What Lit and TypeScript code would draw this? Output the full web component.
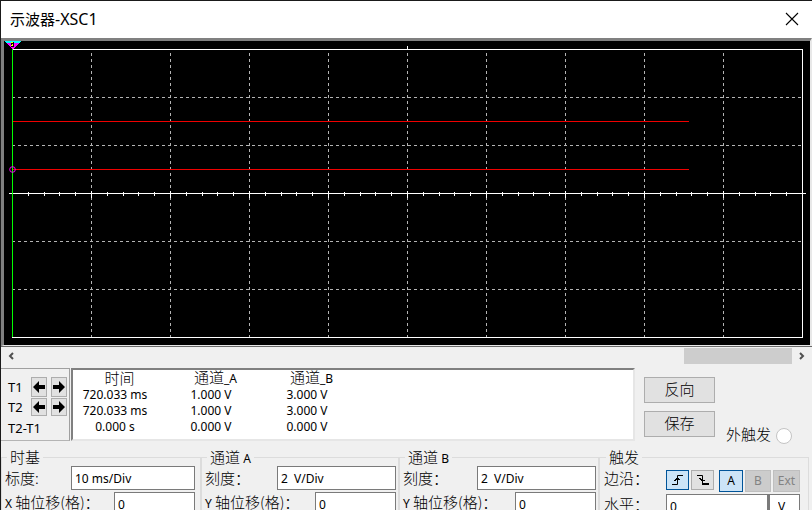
import { LitElement, html, css, svg } from "lit";
import { customElement } from "lit/decorators.js";

const PLOT = { x: 8, y: 8, cols: 10, rows: 6, cw: 79, rh: 48 };

@customElement("scope-screen")
class ScopeScreen extends LitElement {
  static styles = css`
    :host {
      display: block;
      background: #000;
      border-style: solid;
      border-width: 3px 2px 1px 3px;
      border-color: #808080 #e8e8e8 #e8e8e8 #808080;
    }
    svg {
      display: block;
      width: 100%;
      height: auto;
      shape-rendering: crispEdges;
    }
    .frame { fill: none; stroke: #fff; }
    .axis { stroke: #fff; }
    .grid { stroke: #b4b4b4; stroke-dasharray: 3 3; }
    .trace { stroke: #f00000; }
    .cursor { stroke: #00ff00; }
    .ring { fill: none; stroke: #ff00ff; shape-rendering: auto; }
    .top { fill: #00ffff; }
    .tip { fill: #ff00ff; }
    .mark { fill: #ffff00; }
    .ink { fill: #000; }
  `;

  render() {
    const { x, y, cols, rows, cw, rh } = PLOT;
    const w = cols * cw;
    const h = rows * rh;
    const mid = y + h / 2 + 0.5;
    const inner = (n: number) => Array.from({ length: n - 1 }, (_, i) => i + 1);
    return html`
      <svg viewBox="0 0 806 304" role="img" aria-label="示波器波形">
        ${inner(cols).map((i) => svg`<line class="grid" x1=${x + i * cw + 0.5} x2=${x + i * cw + 0.5} y1=${y + 4} y2=${y + h}></line>`)}
        ${inner(rows).filter((i) => i !== 3).map((i) => svg`<line class="grid" x1=${x} x2=${x + w} y1=${y + i * rh + 0.5} y2=${y + i * rh + 0.5}></line>`)}
        <rect class="frame" x=${x + 0.5} y=${y + 0.5} width=${w} height=${h}></rect>
        <line class="axis" x1="403.5" x2="403.5" y1="5" y2="8"></line>
        <line class="axis" x1="5" x2="802" y1=${mid} y2=${mid}></line>
        ${inner(cols * 5).map((i) => {
          const tx = Math.round(x + (i * cw) / 5) + 0.5;
          const major = i % 5 === 0;
          return svg`<line class="axis" x1=${tx} x2=${tx} y1=${mid - (major ? 2.5 : 1.5)} y2=${mid + (major ? 4.5 : 2.5)}></line>`;
        })}
        <line class="trace" x1="9" x2="685" y1="80.5" y2="80.5"></line>
        <line class="trace" x1="9" x2="685" y1="128.5" y2="128.5"></line>
        <line class="cursor" x1="8.5" x2="8.5" y1="8" y2="296"></line>
        <circle class="ring" cx="8.5" cy="128.5" r="2.8"></circle>
        <path class="top" d="M0 0H17L15 2H2Z"></path>
        <path class="tip" d="M2 2H15L9 8H8Z"></path>
        <path class="ink" d="M7 1H10V6H7Z"></path>
        <path class="mark" d="M7 1H9V2H7ZM8 3H9V5H7V4H8Z"></path>
      </svg>
    `;
  }
}

@customElement("app-root")
class AppRoot extends LitElement {
  static styles = css`
    :host {
      display: flex;
      flex-direction: column;
      box-sizing: border-box;
      height: 100vh;
      overflow: hidden;
      border-top: 1px solid #1a1a1a;
      border-left: 1px solid #1a1a1a;
      background: #f0f0f0;
      color: #000;
      font: 12px/16px "Noto Sans", "Noto Sans CJK SC", sans-serif;
    }
    * { box-sizing: border-box; }
    button, input { font: inherit; color: inherit; margin: 0; padding: 0; border-radius: 0; }
    svg { display: block; }
    .cjk { font: 15px/20px "Noto Sans CJK SC", sans-serif; font-weight: 300; }
    .title {
      flex: none;
      display: flex;
      align-items: center;
      justify-content: space-between;
      height: 37px;
      padding: 0 13px 2px 9px;
      background: #fff;
    }
    h1 { margin: 0; font: 15px/20px "Noto Sans", "Noto Sans CJK SC", sans-serif; }
    .model { font-size: 16px; }
    .close, .arrow { border: 0; background: none; }
    scope-screen { flex: none; }
    .scroll {
      flex: none;
      display: flex;
      align-items: center;
      height: 18px;
      border-top: 1px solid #696969;
    }
    .scroll .arrow { width: 20px; display: flex; justify-content: center; }
    .track { flex: 1; height: 16px; display: flex; justify-content: flex-end; }
    .thumb { width: 14%; background: #cdcdcd; }
    .readout { flex: none; display: flex; margin-top: 4px; height: 73px; }
    .cursors {
      width: 69px;
      display: grid;
      grid-template: 20px 18px 22px / 19px 16px 16px;
      gap: 1px 4px;
      align-items: center;
      padding: 8px 0 0 7px;
      border: 1px solid #a0a0a0;
      border-left: 0;
      border-bottom-color: #b4b4b4;
      margin-right: 1px;
      font-size: 13px;
    }
    .cursors .wide { grid-column: 1 / -1; }
    .cursors button {
      height: 100%;
      display: flex;
      align-items: center;
      justify-content: center;
      border: 1px solid #adadad;
      background: #e1e1e1;
    }
    .values {
      flex: 0 1 564px;
      background: #fff;
      border: 2px solid #808080;
      border-right-color: #e6e6e6;
      border-bottom-color: #e6e6e6;
      overflow: hidden;
    }
    table { border-collapse: collapse; table-layout: fixed; width: 276px; margin-top: -1px; }
    .c1, .c3 { width: 84px; }
    th, td { padding: 0; text-align: center; white-space: nowrap; }
    th { font: 15px/16px "Noto Sans CJK SC", sans-serif; font-weight: 300; padding-left: 9px; }
    td { line-height: 16px; }
    .latin { font: 12px/16px "Noto Sans", sans-serif; }
    .actions { display: flex; flex-direction: column; gap: 8px; padding: 9px 0 0 9px; }
    .actions button { width: 71px; height: 26px; border: 1px solid #adadad; background: #e1e1e1; line-height: 20px; padding-bottom: 2px; }
    .ext { align-self: flex-end; display: flex; align-items: center; gap: 5px; padding: 0 0 0 11px; height: 14px; }
    .ext input {
      appearance: none;
      width: 16px;
      height: 16px;
      border: 1px solid #c4c4c4;
      border-radius: 50%;
      background: #fff;
      margin-top: 4px;
    }
    .groups { flex: none; display: grid; grid-template-columns: 200fr 198fr 200fr 210fr; margin: 6px 3px 0 0; }
    fieldset {
      min-width: 0;
      margin: 0;
      padding: 0 2px 8px 3px;
      border: 1px solid #dcdcdc;
    }
    legend { margin-left: 2px; padding: 0 3px; height: 20px; white-space: nowrap; }
    .row { display: flex; align-items: center; justify-content: space-between; height: 24px; margin-bottom: 2px; white-space: nowrap; }
    .row input { height: 24px; border: 1px solid #7a7a7a; background: #fff; padding-left: 3px; min-width: 0; }
    .first { margin-top: -1px; }
    .low { padding-bottom: 4px; }
    .scale { width: 119px; }
    .base { width: 124px; }
    .offset { width: 81px; }
    .time { padding-right: 5px; }
    .trigger { padding-right: 8px; padding-left: 4px; }
    .trigger .row { margin-bottom: 4px; }
    .edges { display: flex; align-items: flex-start; gap: 2px; padding-top: 6px; }
    .edges button {
      height: 22px;
      width: 26px;
      border: 1px solid #bfbfbf;
      background: #cccccc;
      color: #838383;
      display: flex;
      align-items: center;
      justify-content: center;
    }
    .edges .edge { width: 23px; height: 20px; background: #e1e1e1; border-color: #adadad; }
    .edges .on { background: #cce4f7; border-color: #005499; color: #000; }
    .edges .src { width: 24px; margin-left: 3px; }
    .edges .last { width: 27px; }
    .level { display: flex; }
    .level input { width: 102px; }
    .level .unit { width: 32px; padding-left: 8px; border-left-width: 2px; }
  `;

  private arrow(dir: "left" | "right") {
    return html`<svg width="12" height="12" viewBox="0 0 12 12">
      <path d=${dir === "left" ? "M0 6L6 0V4H12V8H6V12Z" : "M12 6L6 0V4H0V8H6V12Z"}></path>
    </svg>`;
  }

  private chevron(d: string) {
    return html`<svg width="8" height="8" viewBox="0 0 8 8" fill="none" stroke="#505050" stroke-width="2"><path d=${d}></path></svg>`;
  }

  private channel(name: string) {
    const id = name.toLowerCase();
    return html`<fieldset>
      <legend><span class="cjk">通道</span> ${name}</legend>
      <div class="row first">
        <label class="cjk" for="scale-${id}">刻度：</label>
        <input class="scale" id="scale-${id}" value="2&nbsp;&nbsp;V/Div" />
      </div>
      <div class="row">
        <label class="low" for="offset-${id}">Y <span class="cjk">轴位移(格)：</span></label>
        <input class="offset" id="offset-${id}" value="0" />
      </div>
    </fieldset>`;
  }

  render() {
    const readings = [
      ["720.033 ms", "1.000 V", "3.000 V"],
      ["720.033 ms", "1.000 V", "3.000 V"],
      ["0.000 s", "0.000 V", "0.000 V"],
    ];
    return html`
      <header class="title">
        <h1>示波器<span class="model">-XSC1</span></h1>
        <button class="close" aria-label="关闭">
          <svg width="14" height="14" viewBox="0 0 14 14" stroke="#000" stroke-width="1.1"><path d="M1 1L13 13M13 1L1 13"></path></svg>
        </button>
      </header>
      <scope-screen></scope-screen>
      <div class="scroll">
        <button class="arrow" aria-label="向左滚动">${this.chevron("M6 1L3 4L6 7")}</button>
        <div class="track"><div class="thumb"></div></div>
        <button class="arrow" aria-label="向右滚动">${this.chevron("M2 1L5 4L2 7")}</button>
      </div>
      <section class="readout">
        <div class="cursors">
          <span>T1</span>
          <button aria-label="T1 左移">${this.arrow("left")}</button>
          <button aria-label="T1 右移">${this.arrow("right")}</button>
          <span>T2</span>
          <button aria-label="T2 左移">${this.arrow("left")}</button>
          <button aria-label="T2 右移">${this.arrow("right")}</button>
          <span class="wide">T2-T1</span>
        </div>
        <div class="values">
          <table>
            <colgroup><col class="c1" /><col /><col class="c3" /></colgroup>
            <thead>
              <tr>
                <th>时间</th>
                <th>通道<span class="latin">_A</span></th>
                <th>通道<span class="latin">_B</span></th>
              </tr>
            </thead>
            <tbody>
              ${readings.map((r) => html`<tr>${r.map((v) => html`<td>${v}</td>`)}</tr>`)}
            </tbody>
          </table>
        </div>
        <div class="actions">
          <button class="cjk">反向</button>
          <button class="cjk">保存</button>
        </div>
        <div class="ext">
          <label class="cjk" for="ext">外触发</label>
          <input type="radio" id="ext" />
        </div>
      </section>
      <section class="groups">
        <fieldset class="time">
          <legend class="cjk">时基</legend>
          <div class="row first">
            <label class="cjk" for="timebase">标度:</label>
            <input class="base" id="timebase" value="10 ms/Div" />
          </div>
          <div class="row">
            <label class="low" for="offset-x">X <span class="cjk">轴位移(格)：</span></label>
            <input class="offset" id="offset-x" value="0" />
          </div>
        </fieldset>
        ${this.channel("A")}
        ${this.channel("B")}
        <fieldset class="trigger">
          <legend class="cjk">触发</legend>
          <div class="row first">
            <span class="cjk">边沿：</span>
            <div class="edges">
              <button class="edge on" aria-label="上升沿">
                <svg width="12" height="12" viewBox="0 0 12 12" fill="none" stroke="#000"><path d="M0 10.5H5.5V1.5H11M2 6.5H4M3 5.5H5M4 4.5H7M6 5.5H8"></path></svg>
              </button>
              <button class="edge" aria-label="下降沿">
                <svg width="12" height="12" viewBox="0 0 12 12" fill="none" stroke="#000"><path d="M0 1.5H5.5V10.5M6 9.5H12M5 10.5H12M2 4.5H4M3 5.5H5M4 6.5H8"></path></svg>
              </button>
              <button class="src on">A</button>
              <button disabled>B</button>
              <button class="last" disabled>Ext</button>
            </div>
          </div>
          <div class="row">
            <label class="cjk low" for="level">水平：</label>
            <div class="level">
              <input id="level" value="0" />
              <input class="unit" aria-label="单位" value="V" />
            </div>
          </div>
        </fieldset>
      </section>
    `;
  }
}
